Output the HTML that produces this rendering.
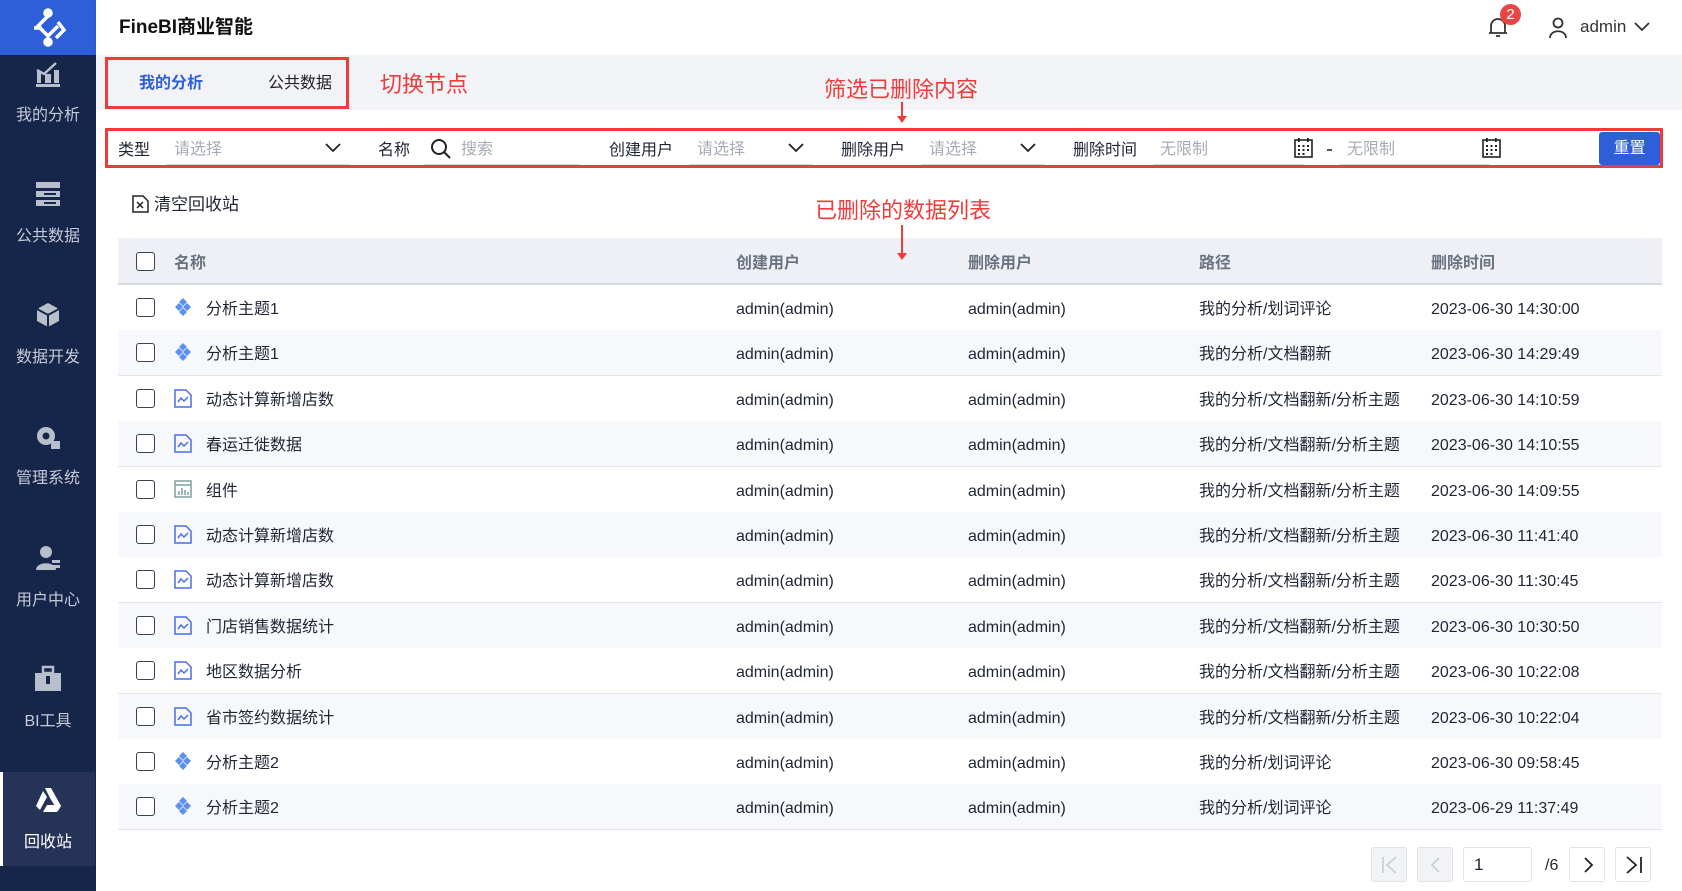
<!DOCTYPE html>
<html><head><meta charset="utf-8"><style>
*{margin:0;padding:0;box-sizing:border-box}
body{width:1682px;height:891px;overflow:hidden;background:#fff;font-family:"Liberation Sans","Noto Sans CJK SC",sans-serif;color:#1e2533;position:relative;font-size:16px;line-height:20px}
.abs{position:absolute}
#side{left:0;top:0;width:96px;height:891px;background:#16254a}
#logo{left:0;top:0;width:96px;height:55px;background:#2e5fd9}
.si{position:absolute;left:0;width:96px;text-align:center;color:#c4cad6;font-size:16px;margin-top:2px}
.ic{position:absolute;left:34px;width:28px;height:28px}
#hdr{left:96px;top:0;width:1586px;height:55px;background:#fff;box-shadow:0 2px 4px rgba(0,0,0,.06)}
#gray{left:96px;top:55px;width:1586px;height:55px;background:#f1f3f7}
.red{position:absolute;border:3px solid #f03b3b}
.rt{position:absolute;color:#f03b3b;font-size:22px;line-height:26px}
.lbl{position:absolute;top:141px;font-size:16px;color:#1e2533}
.ph{position:absolute;top:140px;font-size:16px;color:#a6acb6}
.ul{position:absolute;top:164px;height:1px;background:#d5d9e0}
.th{position:absolute;top:254px;font-size:16px;color:#6b7280;font-weight:bold}
.row{position:absolute;left:118px;width:1544px;height:46px;border-bottom:1px solid #e3e6eb}
.row span{position:absolute;top:15px;font-size:16px;line-height:20px;white-space:nowrap}
.cb{position:absolute;left:18px;top:13px;width:19px;height:19px;border:1.5px solid #3a4150;border-radius:3px;background:#fff}
.pb{position:absolute;top:847px;width:36px;height:35px;border:1px solid #dfe2e7;border-radius:3px;background:#fff}
.pb svg{position:absolute;left:9px;top:8px}
</style></head><body>
<div id="side" class="abs">
 <div id="logo" class="abs"><svg class="abs" style="left:28px;top:8px" width="40" height="40" viewBox="0 0 40 40" fill="none" stroke="#fff" stroke-width="3.5"><circle cx="20" cy="5" r="3" fill="#fff"/><path d="M20 8 L10 18 L20 28 L30 18 M6 20 L14 20 M30 14 L36 22 L28 30"/><circle cx="20" cy="34" r="3" fill="#fff"/></svg></div>
 <svg class="ic" style="top:60px" viewBox="0 0 28 28" fill="#b8bfcc"><rect x="2" y="24" width="24" height="3"/><rect x="3" y="11" width="4" height="12"/><rect x="11" y="14" width="6" height="9"/><rect x="20" y="10" width="5" height="13"/><path d="M3 10 L10 14 L22 3" stroke="#b8bfcc" stroke-width="2.5" fill="none"/></svg>
 <div class="si" style="top:104px">我的分析</div>
 <svg class="ic" style="top:180px" viewBox="0 0 28 28" fill="#b8bfcc"><rect x="2" y="2" width="24" height="6"/><rect x="2" y="11" width="24" height="6"/><rect x="2" y="20" width="24" height="6"/><rect x="10" y="13" width="12" height="2" fill="#16254a"/><rect x="10" y="22" width="12" height="2" fill="#16254a"/></svg>
 <div class="si" style="top:225px">公共数据</div>
 <svg class="ic" style="top:301px" viewBox="0 0 28 28" fill="#b8bfcc"><path d="M14 2 L25 8 L25 20 L14 26 L3 20 L3 8Z"/><path d="M3 8 L14 14 L25 8 M14 14 V26" stroke="#16254a" stroke-width="2" fill="none"/></svg>
 <div class="si" style="top:346px">数据开发</div>
 <svg class="ic" style="top:423px" viewBox="0 0 28 28" fill="#b8bfcc"><circle cx="12" cy="13" r="9"/><circle cx="12" cy="13" r="3.5" fill="#16254a"/><rect x="17" y="18" width="9" height="8"/></svg>
 <div class="si" style="top:467px">管理系统</div>
 <svg class="ic" style="top:544px" viewBox="0 0 28 28" fill="#b8bfcc"><circle cx="12" cy="8" r="6"/><path d="M2 26 C2 17 22 17 22 26Z"/><rect x="18" y="16" width="8" height="3"/><rect x="18" y="21" width="8" height="3"/></svg>
 <div class="si" style="top:589px">用户中心</div>
 <svg class="ic" style="top:665px" viewBox="0 0 28 28" fill="#b8bfcc"><rect x="9" y="2" width="10" height="6" fill="none" stroke="#b8bfcc" stroke-width="2.5"/><rect x="1" y="8" width="26" height="18"/><rect x="12" y="11" width="4" height="8" fill="#16254a"/></svg>
 <div class="si" style="top:710px">BI工具</div>
 <div class="abs" style="left:0;top:772px;width:95px;height:94px;background:#253356;border-left:3px solid #fff"></div>
 <svg class="ic" style="top:786px" viewBox="0 0 28 28" fill="#fff"><path d="M11 2 H17 L27 20 L24 25 L16 12 Z"/><path d="M9 5 L13 11 L6 24 L2 20Z"/><path d="M9 26 L13 19 H27 L23 26Z"/></svg>
 <div class="si" style="top:831px;color:#fff">回收站</div>
</div>
<div id="hdr" class="abs"><div class="abs" style="left:23px;top:18px;font-size:19px;font-weight:bold;color:#111">FineBI商业智能</div>
 <svg class="abs" style="left:1390px;top:15px" width="24" height="24" viewBox="0 0 24 24" fill="none" stroke="#333" stroke-width="1.8"><path d="M5 18 V11 A7 7 0 0 1 19 11 V18 Z M3 18 H21 M10 21 H14"/></svg>
 <div class="abs" style="left:1404px;top:4px;width:21px;height:21px;border-radius:50%;background:#e84545;color:#fff;font-size:15px;text-align:center;line-height:21px">2</div>
 <svg class="abs" style="left:1452px;top:17px" width="20" height="22" viewBox="0 0 20 22" fill="none" stroke="#333" stroke-width="1.8"><circle cx="10" cy="6" r="4.5"/><path d="M2 21 C2 12 18 12 18 21"/></svg>
 <div class="abs" style="left:1484px;top:17px;font-size:17px;color:#333">admin</div>
 <svg class="abs" style="left:1538px;top:22px" width="16" height="10" viewBox="0 0 16 10" fill="none" stroke="#333" stroke-width="1.8"><path d="M1 1 L8 8 L15 1"/></svg>
</div>
<div id="gray" class="abs"></div>
<div class="red" style="left:105px;top:57px;width:244px;height:52px"></div>
<div class="abs" style="left:139px;top:74px;font-size:16px;font-weight:bold;color:#2e5fd9">我的分析</div>
<div class="abs" style="left:268px;top:74px;font-size:16px;color:#222">公共数据</div>
<div class="rt" style="left:380px;top:72px">切换节点</div>
<div class="rt" style="left:824px;top:77px">筛选已删除内容</div>
<div class="abs" style="left:901px;top:102px;width:2px;height:16px;background:#f03b3b"></div>
<div class="abs" style="left:897px;top:116px;border:5px solid transparent;border-top:7px solid #f03b3b"></div>
<div class="red" style="left:105px;top:128px;width:1558px;height:40px"></div>
<div class="lbl" style="left:118px">类型</div>
<div class="ph" style="left:174px">请选择</div><div class="ul" style="left:166px;width:184px"></div>
<svg class="abs" style="left:325px;top:143px" width="16" height="10" viewBox="0 0 16 10" fill="none" stroke="#222" stroke-width="1.8"><path d="M1 1 L8 8 L15 1"/></svg>
<div class="lbl" style="left:378px">名称</div>
<svg class="abs" style="left:430px;top:138px" width="22" height="22" viewBox="0 0 22 22" fill="none" stroke="#222" stroke-width="2"><circle cx="9" cy="9" r="7"/><path d="M14 14 L20 20"/></svg>
<div class="ph" style="left:461px">搜索</div><div class="ul" style="left:424px;width:156px"></div>
<div class="lbl" style="left:609px">创建用户</div>
<div class="ph" style="left:697px">请选择</div><div class="ul" style="left:689px;width:124px"></div>
<svg class="abs" style="left:788px;top:143px" width="16" height="10" viewBox="0 0 16 10" fill="none" stroke="#222" stroke-width="1.8"><path d="M1 1 L8 8 L15 1"/></svg>
<div class="lbl" style="left:841px">删除用户</div>
<div class="ph" style="left:929px">请选择</div><div class="ul" style="left:921px;width:124px"></div>
<svg class="abs" style="left:1020px;top:143px" width="16" height="10" viewBox="0 0 16 10" fill="none" stroke="#222" stroke-width="1.8"><path d="M1 1 L8 8 L15 1"/></svg>
<div class="lbl" style="left:1073px">删除时间</div>
<div class="ph" style="left:1160px">无限制</div><div class="ul" style="left:1153px;width:151px"></div>
<svg class="abs" style="left:1294px;top:138px" width="19" height="20" viewBox="0 0 19 20" fill="#222"><rect x="1" y="2" width="17" height="17" fill="none" stroke="#222" stroke-width="1.6"/><rect x="4" y="0" width="1.8" height="4"/><rect x="13" y="0" width="1.8" height="4"/><rect x="4" y="7" width="2" height="2"/><rect x="8.5" y="7" width="2" height="2"/><rect x="13" y="7" width="2" height="2"/><rect x="4" y="11" width="2" height="2"/><rect x="8.5" y="11" width="2" height="2"/><rect x="13" y="11" width="2" height="2"/><rect x="4" y="15" width="2" height="2"/><rect x="8.5" y="15" width="2" height="2"/></svg>
<div class="abs" style="left:1327px;top:149px;width:5px;height:1.5px;background:#555"></div>
<div class="ph" style="left:1347px">无限制</div><div class="ul" style="left:1339px;width:151px"></div>
<svg class="abs" style="left:1482px;top:138px" width="19" height="20" viewBox="0 0 19 20" fill="#222"><rect x="1" y="2" width="17" height="17" fill="none" stroke="#222" stroke-width="1.6"/><rect x="4" y="0" width="1.8" height="4"/><rect x="13" y="0" width="1.8" height="4"/><rect x="4" y="7" width="2" height="2"/><rect x="8.5" y="7" width="2" height="2"/><rect x="13" y="7" width="2" height="2"/><rect x="4" y="11" width="2" height="2"/><rect x="8.5" y="11" width="2" height="2"/><rect x="13" y="11" width="2" height="2"/><rect x="4" y="15" width="2" height="2"/><rect x="8.5" y="15" width="2" height="2"/></svg>
<div class="abs" style="left:1599px;top:132px;width:61px;height:33px;background:#2e5fd9;border-radius:3px;color:#fff;text-align:center;line-height:33px;font-size:16px">重置</div>
<svg class="abs" style="left:132px;top:195px" width="17" height="18" viewBox="0 0 17 18" fill="none" stroke="#222" stroke-width="1.5"><path d="M1 1 H11 L16 6 V17 H1Z M5 7 L11 13 M11 7 L5 13"/></svg>
<div class="abs" style="left:154px;top:195px;font-size:17px">清空回收站</div>
<div class="abs" style="left:118px;top:238px;width:1544px;height:47px;background:#eef0f5;border-bottom:2px solid #d4d8df"></div>
<div class="rt" style="left:815px;top:198px">已删除的数据列表</div>
<div class="abs" style="left:901px;top:225px;width:2px;height:30px;background:#f03b3b"></div>
<div class="abs" style="left:897px;top:253px;border:5px solid transparent;border-top:7px solid #f03b3b"></div>
<div class="cb" style="left:136px;top:252px"></div>
<div class="th" style="left:174px">名称</div><div class="th" style="left:736px">创建用户</div><div class="th" style="left:968px">删除用户</div><div class="th" style="left:1199px">路径</div><div class="th" style="left:1431px">删除时间</div>
<div id="rows"></div>
<script>
var d=[["t","分析主题1","我的分析/划词评论","2023-06-30 14:30:00"],["t","分析主题1","我的分析/文档翻新","2023-06-30 14:29:49"],["c","动态计算新增店数","我的分析/文档翻新/分析主题","2023-06-30 14:10:59"],["c","春运迁徙数据","我的分析/文档翻新/分析主题","2023-06-30 14:10:55"],["b","组件","我的分析/文档翻新/分析主题","2023-06-30 14:09:55"],["c","动态计算新增店数","我的分析/文档翻新/分析主题","2023-06-30 11:41:40"],["c","动态计算新增店数","我的分析/文档翻新/分析主题","2023-06-30 11:30:45"],["c","门店销售数据统计","我的分析/文档翻新/分析主题","2023-06-30 10:30:50"],["c","地区数据分析","我的分析/文档翻新/分析主题","2023-06-30 10:22:08"],["c","省市签约数据统计","我的分析/文档翻新/分析主题","2023-06-30 10:22:04"],["t","分析主题2","我的分析/划词评论","2023-06-30 09:58:45"],["t","分析主题2","我的分析/划词评论","2023-06-29 11:37:49"]];
var ic={t:'<svg width="18" height="18" viewBox="0 0 18 18" fill="#5b8ff0"><path d="M9 0 L13 4 L9 8 L5 4Z"/><path d="M13 5 L17 9 L13 13 L9 9Z"/><path d="M5 5 L9 9 L5 13 L1 9Z"/><path d="M9 10 L13 14 L9 18 L5 14Z"/></svg>',
c:'<svg width="18" height="19" viewBox="0 0 18 19" fill="none" stroke="#4a6ee8" stroke-width="1.5"><path d="M1 1 H12 L17 6 V18 H1Z"/><path d="M4 13 L7 9 L10 12 L14 8"/></svg>',
b:'<svg width="18" height="18" viewBox="0 0 18 18" fill="none" stroke="#7fa0a0" stroke-width="1.5"><rect x="1" y="1" width="16" height="16"/><path d="M1 5 H17 M5 15 V11 M8 15 V8 M11 15 V10 M14 15 V12"/></svg>'};
var h='';d.forEach(function(r,i){h+='<div class="row" style="top:'+(285+i*45.4)+'px;background:'+(i%2?'#f7f8fb':'#fff')+'"><div class="cb"></div><span style="left:56px;top:13px;line-height:0">'+ic[r[0]]+'</span><span style="left:88px">'+r[1]+'</span><span style="left:618px">admin(admin)</span><span style="left:850px">admin(admin)</span><span style="left:1081px">'+r[2]+'</span><span style="left:1313px">'+r[3]+'</span></div>'});
document.getElementById('rows').innerHTML=h;
</script>
<div class="pb" style="left:1371px;background:#f1f3f7"><svg width="18" height="18" viewBox="0 0 18 18" fill="none" stroke="#ccd0d6" stroke-width="1.8"><path d="M2 1 V17 M15 1 L6 9 L15 17"/></svg></div>
<div class="pb" style="left:1417px;background:#f1f3f7"><svg width="18" height="18" viewBox="0 0 18 18" fill="none" stroke="#ccd0d6" stroke-width="1.8"><path d="M12 2 L5 9 L12 16"/></svg></div>
<div class="pb" style="left:1463px;width:69px;padding:7px 0 0 10px;font-size:17px">1</div>
<div class="abs" style="left:1545px;top:856px;font-size:16px">/6</div>
<div class="pb" style="left:1569px"><svg width="18" height="18" viewBox="0 0 18 18" fill="none" stroke="#222" stroke-width="1.8"><path d="M6 2 L13 9 L6 16"/></svg></div>
<div class="pb" style="left:1615px"><svg width="18" height="18" viewBox="0 0 18 18" fill="none" stroke="#222" stroke-width="1.8"><path d="M2 1 L11 9 L2 17 M16 1 V17"/></svg></div>
</body></html>
